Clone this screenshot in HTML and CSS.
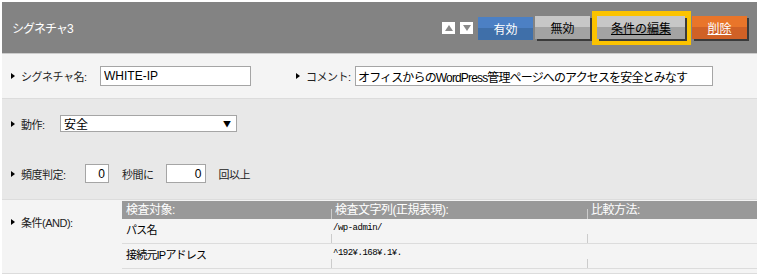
FILE: index.html
```html
<!DOCTYPE html>
<html lang="ja">
<head>
    <meta charset="UTF-8">
    <title>シグネチャ3</title>
    <link rel="stylesheet" href="styles.css">
</head>
<body>
<div class="panel">
    <div class="head">
        <span class="title">シグネチャ3</span>
        <div class="tools">
            <span class="arrow"><span class="tri up"></span></span>
            <span class="arrow"><span class="tri down"></span></span>
            <span class="btn blue on">有効</span>
            <span class="btn gray">無効</span>
            <span class="focus"><a class="btn gray link wide">条件の編集</a></span>
            <a class="btn orange link">削除</a>
        </div>
    </div>
    <div class="row r1">
        <label class="lbl name-lbl">シグネチャ名:</label>
        <input class="txt name" type="text" value="WHITE-IP">
        <label class="lbl second">コメント:</label>
        <input class="txt comment" type="text" value="オフィスからのWordPress管理ページへのアクセスを安全とみなす">
    </div>
    <div class="row r2">
        <div class="line">
            <label class="lbl act-lbl">動作:</label>
            <div class="select"><span>安全</span><span class="caret">▼</span></div>
        </div>
        <div class="line freq">
            <label class="lbl freq-lbl">頻度判定:</label>
            <input class="txt num short" type="text" value="0">
            <span class="unit">秒間に</span>
            <input class="txt num" type="text" value="0">
            <span class="unit">回以上</span>
        </div>
    </div>
    <div class="row r3">
        <label class="lbl">条件(AND):</label>
        <div class="cond">
            <div class="tr th">
                <div class="td c1">検査対象:</div>
                <div class="td c2 sep">検査文字列(正規表現):</div>
                <div class="td c3 sep">比較方法:</div>
            </div>
            <div class="tr">
                <div class="td c1">パス名</div>
                <div class="td c2 sep mono">/wp-admin/</div>
                <div class="td c3 sep"></div>
            </div>
            <div class="tr">
                <div class="td c1">接続元IPアドレス</div>
                <div class="td c2 sep mono">^192¥.168¥.1¥.</div>
                <div class="td c3 sep"></div>
            </div>
        </div>
    </div>
</div>
</body>
</html>
```

FILE: styles.css
```css
body {
    margin: 2px;
    font-family: "Liberation Sans", "Noto Sans CJK JP", sans-serif;
    font-size: 12px;
    color: #000;
    background: #fff;
}

.panel {
    width: 755px;
}

.head {
    height: 51px;
    background-color: #838383;
    border-bottom: 1px solid #ccc;
    display: flex;
    align-items: center;
    justify-content: space-between;
    padding: 0 8px 0 10px;
}

.title {
    color: #fff;
    font-size: 12px;
    letter-spacing: -1px;
}

.tools {
    display: flex;
    align-items: center;
}

.arrow {
    width: 13px;
    height: 12px;
    background-color: #fff;
    margin-right: 5px;
    display: flex;
    align-items: center;
    justify-content: center;
}

.tri {
    width: 0;
    height: 0;
    border-left: 4px solid transparent;
    border-right: 4px solid transparent;
}

.tri.up {
    border-bottom: 6px solid #8a8a8a;
}

.tri.down {
    border-top: 6px solid #8a8a8a;
}

.btn {
    display: block;
    width: 55px;
    height: 23px;
    line-height: 23px;
    text-align: center;
    font-family: "Noto Sans CJK JP", sans-serif;
    font-size: 12px;
    box-shadow: 2px 2px 0 #3a3a3a;
    margin-right: 2px;
}

.btn.on {
    box-shadow: none;
    margin-top: 2px;
}

.blue {
    color: #fff;
    background: linear-gradient(#4c80c4 50%, #3f6fa9 50%);
}

.gray {
    color: #000;
    background: linear-gradient(#c7c7c7 50%, #a3a3a3 50%);
}

.orange {
    color: #fff;
    background: linear-gradient(#e9752a 50%, #d06126 50%);
}

.link {
    text-decoration: underline;
}

.wide {
    width: 88px;
    margin: 0;
}

.focus {
    border: 5px solid #fbc300;
    border-right-width: 6px;
    border-bottom-width: 6px;
    margin: 0 1px 0 0;
}

.row {
    border-bottom: 1px solid #dcdcdc;
}

.lbl {
    box-sizing: border-box;
    display: flex;
    align-items: center;
    padding-left: 9px;
    color: #222;
    font-size: 11px;
    letter-spacing: -0.5px;
}

.lbl::before {
    content: "";
    width: 0;
    height: 0;
    border-left: 4px solid #000;
    border-top: 3px solid transparent;
    border-bottom: 3px solid transparent;
    margin-right: 6px;
}

.r1 {
    height: 44px;
    background-color: #f4f4f4;
    display: flex;
    align-items: center;
}

.txt {
    box-sizing: border-box;
    height: 20px;
    border: 1px solid #a5a5a5;
    background: #fff;
    padding: 0 3px;
    font-family: "Liberation Sans", "Noto Sans CJK JP", sans-serif;
    font-size: 12px;
    color: #000;
    outline: none;
}

.name-lbl {
    width: 98px;
}

.name {
    width: 151px;
}

.lbl.second {
    width: 59px;
    margin-left: 45px;
    padding-left: 0;
}

.comment {
    width: 358px;
    letter-spacing: -0.85px;
    padding-left: 2px;
}

.r2 {
    height: 101px;
    background-color: #e8e8e8;
    display: flex;
    flex-direction: column;
    justify-content: space-between;
    padding: 16px 0;
    box-sizing: border-box;
}

.line {
    display: flex;
    align-items: center;
}

.act-lbl {
    width: 58px;
}

.select {
    box-sizing: border-box;
    width: 177px;
    height: 17px;
    border: 1px solid #a5a5a5;
    background: #fff;
    display: flex;
    align-items: center;
    justify-content: space-between;
    padding: 0 5px 0 3px;
    font-family: "Noto Sans CJK JP", sans-serif;
}

.caret {
    font-size: 8px;
}

.freq-lbl {
    width: 83px;
}

.freq .txt {
    height: 19px;
    width: 40px;
    text-align: right;
}

.freq .short {
    width: 24px;
}

.unit {
    margin: 0 12px 0 13px;
    color: #222;
    font-size: 11px;
    letter-spacing: -0.5px;
}

.r3 {
    height: 74px;
    background-color: #f4f4f4;
    display: flex;
    align-items: flex-start;
    padding-top: 1px;
    box-sizing: border-box;
}

.r3 .lbl {
    width: 120px;
    height: 18px;
    margin-top: 12px;
}

.cond {
    flex: 1;
}

.tr {
    display: flex;
    height: 24px;
    border-bottom: 1px solid #dcdcdc;
}

.tr.th {
    height: 18px;
    border-bottom: none;
    background-color: #999;
    color: #fff;
}

.td {
    box-sizing: border-box;
    padding: 3px 0 0 4px;
    line-height: 16px;
    font-size: 11px;
    letter-spacing: -0.8px;
}

.th .td {
    padding-top: 1px;
    font-size: 12px;
    letter-spacing: -0.5px;
}

.c1 {
    width: 209px;
}

.c2 {
    width: 256px;
}

.c3 {
    flex: 1;
}

.sep {
    background: linear-gradient(#ccc, #ccc) left bottom / 1px 9px no-repeat;
}

.th .sep {
    background-size: 1px 10px;
}

.mono {
    font-family: "Liberation Mono", monospace;
    font-size: 9px;
    letter-spacing: -0.5px;
    padding-left: 2px;
    line-height: 12px;
}
```
